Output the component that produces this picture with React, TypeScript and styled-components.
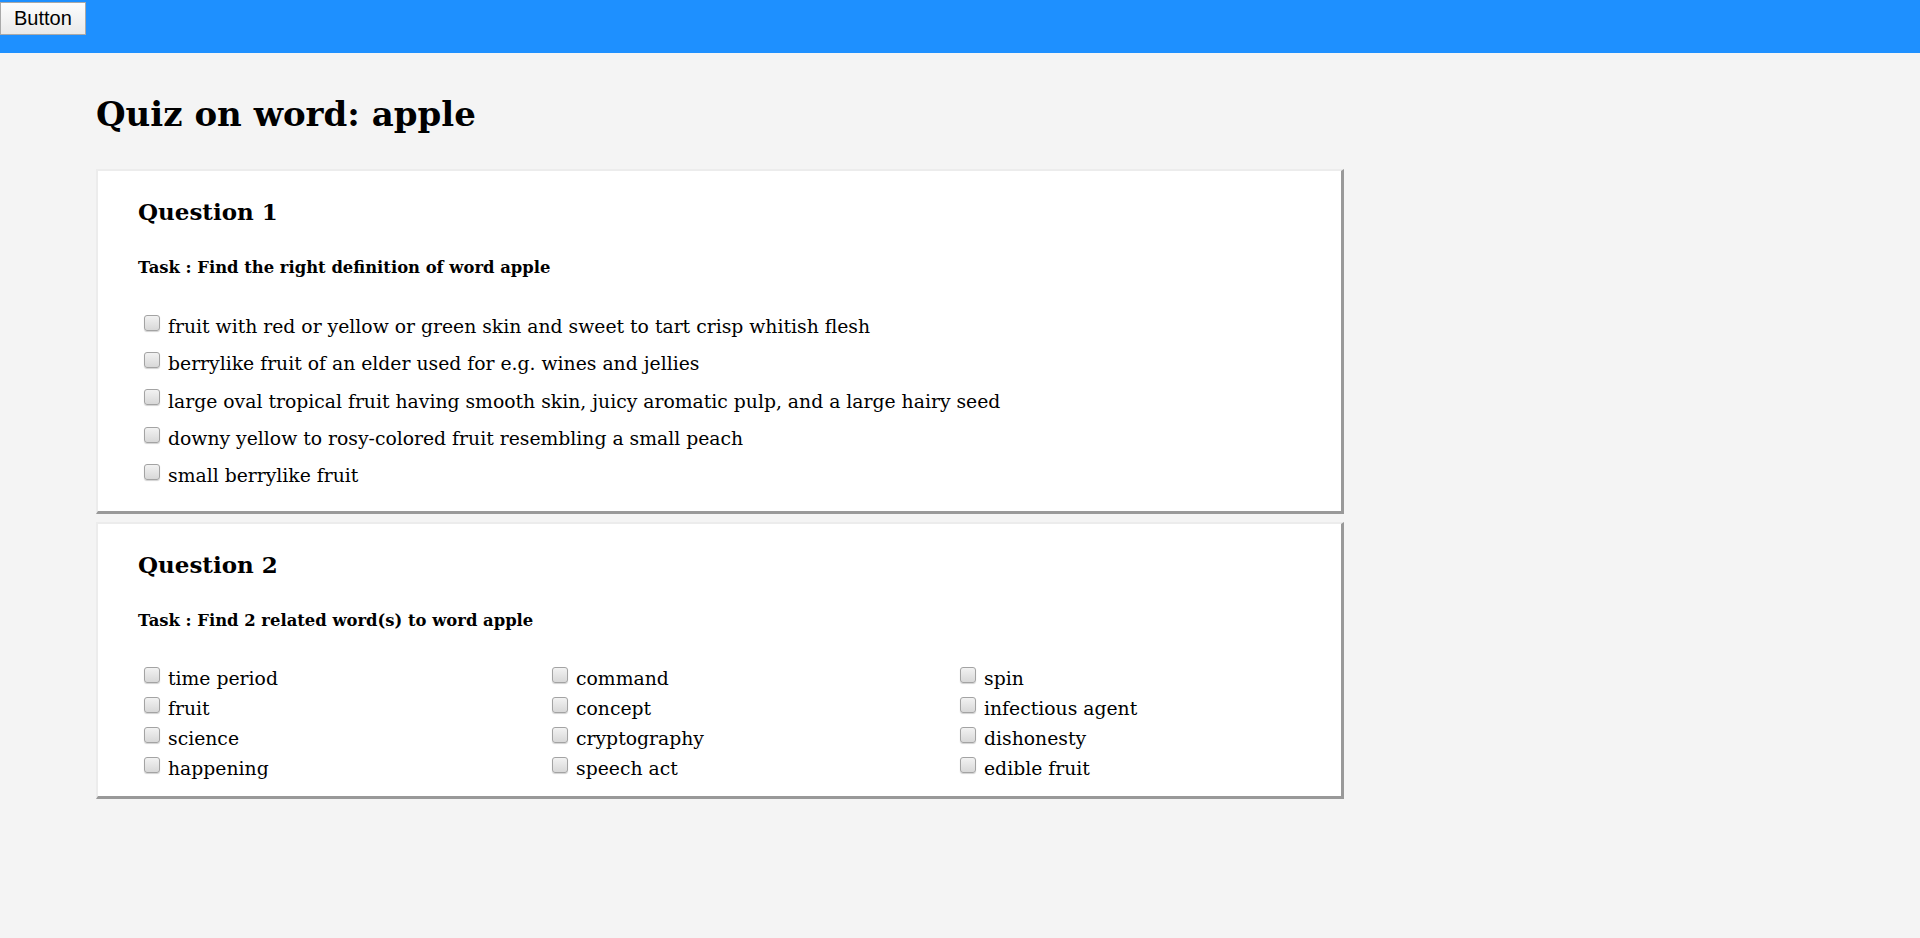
import React from "react";
import styled, { createGlobalStyle } from "styled-components";

const GlobalStyle = createGlobalStyle`
  html, body {
    margin: 0;
    padding: 0;
    background: #f4f4f4;
    min-height: 100%;
  }
  body {
    font-family: "DejaVu Serif", "Liberation Serif", serif;
    color: #000;
  }
`;

const TopBar = styled.header`
  height: 53px;
  background: #1e90ff;
  padding-top: 2px;
  box-sizing: border-box;
  display: flex;
  align-items: flex-start;
`;

const PlainButton = styled.button`
  font-family: "Liberation Sans", Arial, sans-serif;
  font-size: 20px;
  line-height: 23px;
  height: 33px;
  padding: 4px 13px;
  margin: 0;
  color: #000;
  background: linear-gradient(#fdfdfd, #e9e9e9);
  border: 1px solid #a9a9a9;
  border-radius: 0;
  cursor: pointer;
`;

const Main = styled.main`
  padding: 0 0 40px 96px;
  display: flex;
  flex-direction: column;
  gap: 8px;
`;

const Title = styled.h1`
  margin: 40.5px 0 27.5px;
  font-size: 34px;
  line-height: 40px;
  font-weight: bold;
`;

const Card = styled.section<{ $bottom: number }>`
  width: 1248px;
  box-sizing: border-box;
  background: #fff;
  border-top: 2px solid #ececec;
  border-left: 2px solid #ececec;
  border-right: 3px solid #999;
  border-bottom: 3px solid #999;
  padding: 26px 0 ${(p) => p.$bottom}px 40px;
`;

const QuestionTitle = styled.h2`
  margin: 0;
  font-size: 23px;
  line-height: 30px;
  font-weight: bold;
`;

const Task = styled.h4`
  margin: 31px 0 0;
  font-size: 16.4px;
  line-height: 20px;
  font-weight: bold;
`;

const OptionList = styled.div`
  margin-top: 30px;
  display: flex;
  flex-direction: column;
`;

const ColumnsGrid = styled.div`
  margin-top: 33px;
  display: grid;
  grid-template-columns: repeat(3, 408px);
`;

const Column = styled.div`
  display: flex;
  flex-direction: column;
`;

const OptionRow = styled.label<{ $height: number }>`
  display: flex;
  align-items: center;
  gap: 8px;
  height: ${(p) => p.$height}px;
  padding-left: 6px;
  font-size: 18.8px;
  line-height: ${(p) => p.$height}px;
  white-space: nowrap;
`;

const Box = styled.input`
  appearance: none;
  -webkit-appearance: none;
  width: 16px;
  height: 16px;
  margin: 0 0 8px 0;
  flex: none;
  box-sizing: border-box;
  border: 1px solid #a3a3a3;
  border-radius: 3px;
  background: linear-gradient(#f2f2f2, #d8d8d8);
  box-shadow: 0 1px 1px rgba(0, 0, 0, 0.18);
`;

const definitions = [
  "fruit with red or yellow or green skin and sweet to tart crisp whitish flesh",
  "berrylike fruit of an elder used for e.g. wines and jellies",
  "large oval tropical fruit having smooth skin, juicy aromatic pulp, and a large hairy seed",
  "downy yellow to rosy-colored fruit resembling a small peach",
  "small berrylike fruit",
];

const related = [
  ["time period", "fruit", "science", "happening"],
  ["command", "concept", "cryptography", "speech act"],
  ["spin", "infectious agent", "dishonesty", "edible fruit"],
];

function Option({ text, height }: { text: string; height: number }) {
  return (
    <OptionRow $height={height}>
      <Box type="checkbox" />
      <span>{text}</span>
    </OptionRow>
  );
}

export default function App() {
  return (
    <>
      <GlobalStyle />
      <TopBar>
        <PlainButton>Button</PlainButton>
      </TopBar>
      <Main>
        <Title>Quiz on word: apple</Title>
        <Card $bottom={16.5}>
          <QuestionTitle>Question 1</QuestionTitle>
          <Task>Task : Find the right definition of word apple</Task>
          <OptionList>
            {definitions.map((d) => (
              <Option key={d} text={d} height={37.35} />
            ))}
          </OptionList>
        </Card>
        <Card $bottom={13}>
          <QuestionTitle>Question 2</QuestionTitle>
          <Task>Task : Find 2 related word(s) to word apple</Task>
          <ColumnsGrid>
            {related.map((col, i) => (
              <Column key={i}>
                {col.map((w) => (
                  <Option key={w} text={w} height={29.8} />
                ))}
              </Column>
            ))}
          </ColumnsGrid>
        </Card>
      </Main>
    </>
  );
}
